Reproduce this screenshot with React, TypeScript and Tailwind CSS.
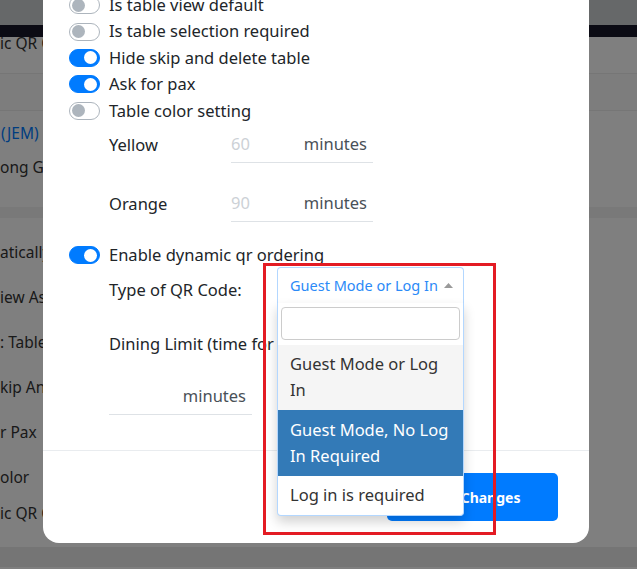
import React from "react";

const body = "text-[16.5px] leading-[26.4px] text-[#212529]";

function Switch({ on }: { on: boolean }) {
  if (on) {
    return (
      <span className="flex h-[18px] w-[31px] shrink-0 items-center justify-end rounded-full border border-[#007bff] bg-[#007bff] pr-[2px]">
        <span className="h-[13px] w-[13px] rounded-full bg-white" />
      </span>
    );
  }
  return (
    <span className="flex h-[18px] w-[31px] shrink-0 items-center rounded-full border border-[#adb5bd] bg-white pl-[2px]">
      <span className="h-[13px] w-[13px] rounded-full bg-[#adb5bd]" />
    </span>
  );
}

function ToggleRow({ on, label }: { on: boolean; label: string }) {
  return (
    <div className={`flex h-[26.4px] items-center gap-[9px] whitespace-nowrap ${body}`}>
      <Switch on={on} />
      <span>{label}</span>
    </div>
  );
}

function MinutesRow({ label, value, className }: { label: string; value: string; className: string }) {
  return (
    <div className={`ml-[40px] flex ${className}`}>
      <div className={`flex w-[122px] items-center ${body}`}>{label}</div>
      <div className="flex h-[36px] w-[142px] items-center justify-between border-b border-[#dee2e6] pr-[6px] text-[16.5px]">
        <span className="text-[#ccd1d6]">{value}</span>
        <span className="text-[#495057]">minutes</span>
      </div>
    </div>
  );
}

const bgRows: [string, string][] = [
  ["atically", "h-[45px]"],
  ["iew As", "h-[45px]"],
  [": Table", "h-[45px]"],
  ["kip And", "h-[45px]"],
  ["r Pax", "h-[45px]"],
  ["olor", "h-[45px]"],
  ["ic QR Code", "h-[27px]"],
];

function BackgroundPage() {
  return (
    <div className="flex h-full flex-col bg-white text-[15.5px] text-[#333]">
      <div className="h-[25px] bg-[#cdd0d2]" />
      <div className="h-[12px] bg-[#171729]" />
      <div className="h-[36px] whitespace-nowrap leading-[12px]">ic QR Code</div>
      <div className="h-[38px] border-y border-[#ececec] bg-[#fafafa]" />
      <div className="h-[96px] whitespace-nowrap pt-[5px] leading-[34px]">
        <div className="pl-[1px] text-[#007bff]">(JEM)</div>
        <div>ong Gong</div>
      </div>
      <div className="h-[11px] bg-[#f2f2f2]" />
      <div className="flex-1 whitespace-nowrap pt-[12.5px]">
        {bgRows.map(([t, h]) => (
          <div key={t + h} className={`flex items-center ${h}`}>
            {t}
          </div>
        ))}
      </div>
      <div className="h-[20px] bg-[#ebebeb]" />
      <div className="h-[2px] bg-[#ffffff]" />
    </div>
  );
}

function QrSelect() {
  return (
    <div className="relative w-[187px]">
      <div className="flex h-[36px] items-center justify-between rounded-t-[4px] border border-b-0 border-[#b3d7ff] bg-white pl-[12px] pr-[10px]">
        <span className="whitespace-nowrap text-[14.5px] text-[#2b8af7]">Guest Mode or Log In</span>
        <svg width="9" height="5" viewBox="0 0 9 5">
          <path d="M0 5 L4.5 0 L9 5 Z" fill="#9a9a9a" />
        </svg>
      </div>
      <div className="absolute left-0 top-[36px] z-10 w-full rounded-b-[4px] border border-t-0 border-[#b3d7ff] bg-white shadow-[0_6px_12px_rgba(0,0,0,0.18)]">
        <div className="px-[3px] pb-[5px] pt-[4px]">
          <div className="h-[33px] rounded-[4px] border border-[#cccccc] bg-white" />
        </div>
        <div className="bg-[#f5f5f5] px-[12px] py-[6.5px] text-[16.5px] leading-[26px] text-[#333]">
          Guest Mode or Log In
        </div>
        <div className="bg-[#337ab7] px-[12px] py-[7px] text-[16.5px] leading-[26px] text-white">
          Guest Mode, No Log In Required
        </div>
        <div className="rounded-b-[4px] px-[12px] py-[6.5px] text-[16.5px] leading-[26px] text-[#333]">
          Log in is required
        </div>
      </div>
    </div>
  );
}

export default function App() {
  return (
    <div className="relative h-[569px] w-[637px] overflow-hidden font-['Noto_Sans',sans-serif]">
      <BackgroundPage />
      <div className="absolute inset-0 bg-black/50" />

      {/* settings modal, scrolled so only the lower part shows */}
      <div className="absolute left-[43px] top-[-60px] w-[546px] rounded-2xl bg-white">
        <div className="pb-[35px] pl-[26px] pr-[26px] pt-[52px]">
          <ToggleRow on={false} label="Is table view default" />
          <ToggleRow on={false} label="Is table selection required" />
          <ToggleRow on label="Hide skip and delete table" />
          <ToggleRow on label="Ask for pax" />
          <ToggleRow on={false} label="Table color setting" />

          <MinutesRow label="Yellow" value="60" className="mt-[3px]" />
          <MinutesRow label="Orange" value="90" className="mt-[23px]" />

          <div className="mt-[20px]">
            <ToggleRow on label="Enable dynamic qr ordering" />
          </div>

          <div className="ml-[40px] mt-[-1.4px] flex">
            <div className={`w-[168px] whitespace-nowrap pt-[10px] ${body}`}>Type of QR Code:</div>
            <QrSelect />
          </div>

          <div className={`ml-[40px] mt-[27.8px] whitespace-nowrap ${body}`}>
            Dining Limit (time for each table)
          </div>

          <div className="ml-[40px] mt-[21.8px] flex h-[36px] w-[143px] items-center justify-end border-b border-[#dee2e6] pr-[6px] text-[16.5px] text-[#495057]">
            minutes
          </div>
        </div>

        <div className="flex justify-end border-t border-[#e9ecef] py-[22px] pr-[31px]">
          <button className="h-[48px] w-[171px] rounded-[5px] bg-[#007bff] text-[14px] font-bold text-white">
            Save Changes
          </button>
        </div>
      </div>

      {/* annotation box */}
      <div className="absolute left-[263px] top-[263px] z-20 h-[272px] w-[233px] border-[3px] border-[#e31b23]" />
    </div>
  );
}
